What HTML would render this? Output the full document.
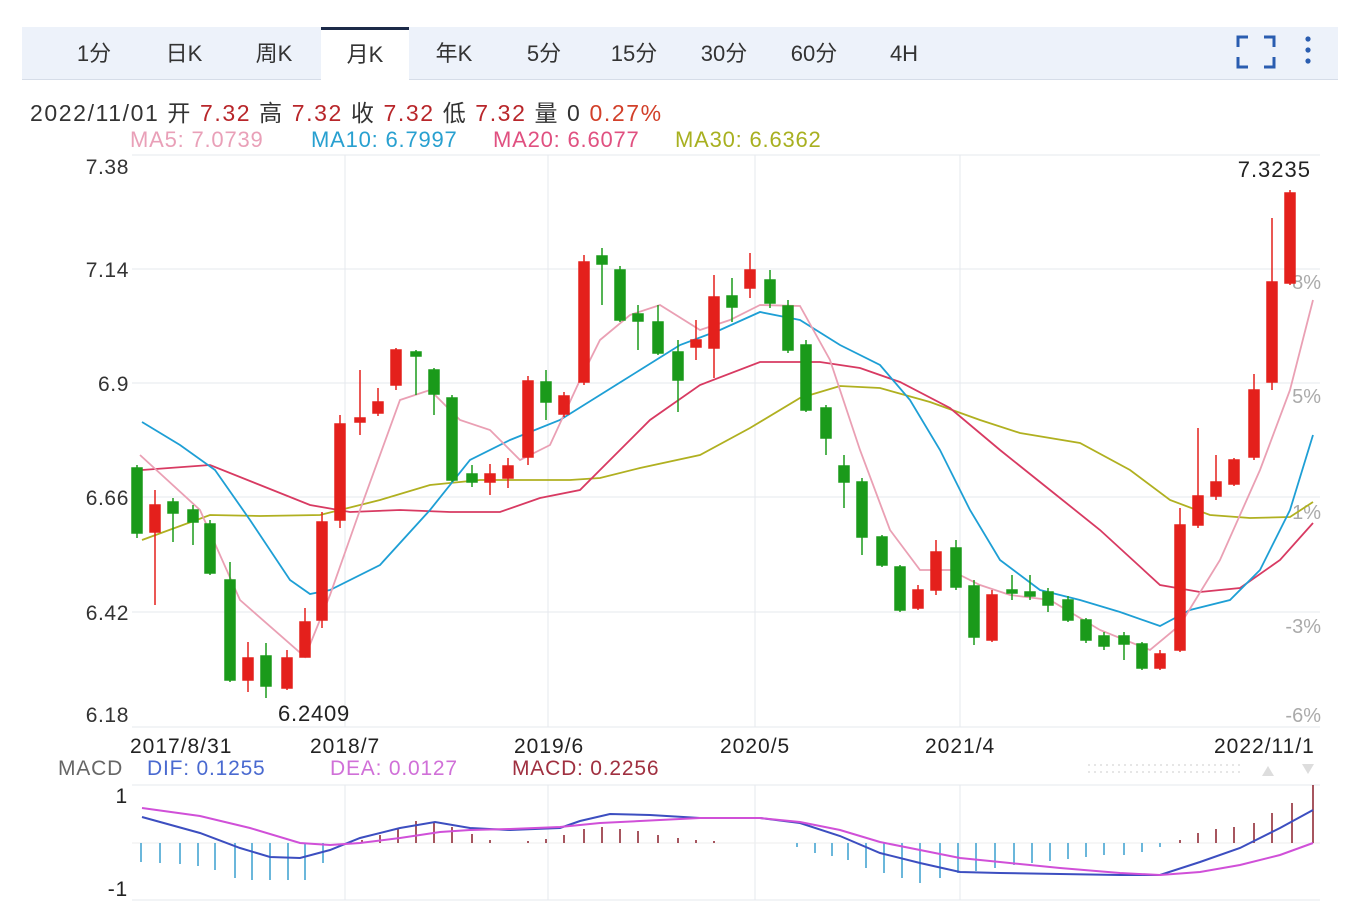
<!DOCTYPE html>
<html><head><meta charset="utf-8">
<style>
html,body{margin:0;padding:0;background:#fff;}
body{width:1364px;height:904px;overflow:hidden;position:relative;font-family:"Liberation Sans","Noto Sans CJK SC",sans-serif;}
.tabs{position:absolute;left:22px;top:27px;width:1316px;height:52px;background:#edf2fa;border-bottom:1px solid #d6dde8;}
.tab{position:absolute;top:0;height:52px;line-height:54px;font-size:22px;color:#333;text-align:center;width:88px;}
.act{background:#fff;border-top:3px solid #1c2a48;height:51px;line-height:50px;}
.t{position:absolute;white-space:nowrap;}
</style></head><body>
<div class="tabs">
<div class="tab" style="left:28px">1分</div>
<div class="tab" style="left:118px">日K</div>
<div class="tab" style="left:208px">周K</div>
<div class="tab act" style="left:299px">月K</div>
<div class="tab" style="left:388px">年K</div>
<div class="tab" style="left:478px">5分</div>
<div class="tab" style="left:568px">15分</div>
<div class="tab" style="left:658px">30分</div>
<div class="tab" style="left:748px">60分</div>
<div class="tab" style="left:838px">4H</div>
<svg style="position:absolute;left:1214px;top:4px" width="40" height="40" viewBox="0 0 40 40"><path d="M2 16V6h10M28 6h10v10M38 26v10H28M12 36H2V26" fill="none" stroke="#2a5db0" stroke-width="3"/></svg>
<svg style="position:absolute;left:1280px;top:4px" width="12" height="40"><circle cx="6" cy="8" r="2.6" fill="#2a5db0"/><circle cx="6" cy="19" r="2.6" fill="#2a5db0"/><circle cx="6" cy="30" r="2.6" fill="#2a5db0"/></svg>
</div>
<div class="t" style="left:30px;top:94px;font-size:23px;letter-spacing:1.6px;color:#333">2022/11/01 开 <span style="color:#b8262a">7.32</span> 高 <span style="color:#b8262a">7.32</span> 收 <span style="color:#b8262a">7.32</span> 低 <span style="color:#b8262a">7.32</span> 量 0 <span style="color:#d2402a">0.27%</span></div>
<div class="t" style="left:130px;top:127px;font-size:22px;letter-spacing:0.8px;color:#e9a0b8">MA5: 7.0739</div>
<div class="t" style="left:311px;top:127px;font-size:22px;letter-spacing:0.8px;color:#28a0d0">MA10: 6.7997</div>
<div class="t" style="left:493px;top:127px;font-size:22px;letter-spacing:0.8px;color:#e05080">MA20: 6.6077</div>
<div class="t" style="left:675px;top:127px;font-size:22px;letter-spacing:0.8px;color:#a8b020">MA30: 6.6362</div>

<svg style="position:absolute;left:0;top:0" width="1364" height="904">
<g stroke="#e6e9ee" stroke-width="1">
<line x1="132" y1="155" x2="1320" y2="155"/>
<line x1="132" y1="269" x2="1320" y2="269"/>
<line x1="132" y1="383" x2="1320" y2="383"/>
<line x1="132" y1="497" x2="1320" y2="497"/>
<line x1="132" y1="612" x2="1320" y2="612"/>
<line x1="132" y1="727" x2="1320" y2="727"/>
<line x1="132" y1="785" x2="1320" y2="785"/>
<line x1="132" y1="900" x2="1320" y2="900"/>
<line x1="345" y1="155" x2="345" y2="727"/><line x1="548" y1="155" x2="548" y2="727"/>
<line x1="755" y1="155" x2="755" y2="727"/><line x1="960" y1="155" x2="960" y2="727"/>
<line x1="345" y1="785" x2="345" y2="900"/><line x1="548" y1="785" x2="548" y2="900"/>
<line x1="755" y1="785" x2="755" y2="900"/><line x1="960" y1="785" x2="960" y2="900"/>
</g>
<g font-family="Liberation Sans" font-size="21" fill="#333" text-anchor="end" letter-spacing="0.6">
<text x="129" y="174">7.38</text><text x="129" y="277">7.14</text><text x="129" y="391">6.9</text>
<text x="129" y="505">6.66</text><text x="129" y="620">6.42</text><text x="129" y="722">6.18</text>
</g>
<g font-family="Liberation Sans" font-size="20" fill="#aaa" text-anchor="end">
<text x="1321" y="403">5%</text><text x="1321" y="519">1%</text><text x="1321" y="633">-3%</text><text x="1321" y="722">-6%</text><text x="1321" y="289">8%</text>
</g>
<text x="1311" y="177" font-family="Liberation Sans" font-size="22" fill="#222" text-anchor="end" letter-spacing="1">7.3235</text>
<text x="278" y="721" font-family="Liberation Sans" font-size="22" fill="#222" letter-spacing="0.8">6.2409</text>
<g font-family="Liberation Sans" font-size="21" fill="#222" letter-spacing="1">
<text x="130" y="753">2017/8/31</text><text x="310" y="753">2018/7</text><text x="514" y="753">2019/6</text>
<text x="720" y="753">2020/5</text><text x="925" y="753">2021/4</text><text x="1214" y="753">2022/11/1</text>
</g>
<g font-family="Liberation Sans" font-size="21" letter-spacing="0.8">
<text x="58" y="775" fill="#666">MACD</text><text x="147" y="775" fill="#4a6ad0">DIF: 0.1255</text>
<text x="330" y="775" fill="#d070d8">DEA: 0.0127</text><text x="512" y="775" fill="#a03040">MACD: 0.2256</text>
<text x="128" y="803" fill="#222" text-anchor="end">1</text><text x="128" y="896" fill="#222" text-anchor="end">-1</text>
</g>
<line x1="1088" y1="765" x2="1240" y2="765" stroke="#ccc" stroke-dasharray="2 4"/>
<line x1="1088" y1="772" x2="1240" y2="772" stroke="#ccc" stroke-dasharray="2 4"/>
<path d="M1262 776l6-10 6 10z" fill="#ddd"/><path d="M1302 764h12l-6 10z" fill="#ddd"/>

<g fill="none" stroke-width="1.8">
<polyline stroke="#b0b020" points="142,540 210,515 260,516 320,515 380,500 430,485 480,480 530,480 570,480 600,478 640,468 700,455 750,428 800,398 840,386 880,388 930,402 980,420 1020,433 1080,443 1130,470 1170,500 1210,515 1250,518 1290,517 1313,502"/>
<polyline stroke="#d83a62" points="142,470 210,465 260,485 310,505 350,512 400,510 450,512 500,512 540,498 580,490 610,460 650,420 700,385 760,362 820,362 860,368 900,382 950,408 1000,450 1050,490 1100,530 1160,585 1200,592 1240,588 1280,560 1313,523"/>
<polyline stroke="#1e9fd5" points="142,422 180,445 215,470 250,520 290,580 310,594 330,590 380,565 430,510 470,460 510,440 560,420 600,395 640,370 680,345 720,330 760,312 800,320 840,345 880,365 910,400 940,450 970,510 1000,560 1040,590 1080,600 1120,612 1160,626 1190,610 1230,600 1260,570 1290,510 1313,435"/>
<polyline stroke="#eaa0b4" points="140,455 200,510 240,600 305,657 330,595 360,510 400,400 430,390 460,420 490,430 520,460 550,445 580,380 600,340 630,315 660,305 700,330 730,320 760,305 800,306 830,360 860,450 890,530 920,570 950,570 980,585 1010,595 1050,600 1100,630 1150,650 1180,625 1220,560 1260,470 1290,390 1313,300"/>
</g>
<g stroke-width="1.5">
<g stroke="#1a9a1a" fill="#1a9a1a">
<line x1="137" y1="465" x2="137" y2="538"/><rect x="132" y="468" width="10" height="65"/>
<line x1="173" y1="498" x2="173" y2="542"/><rect x="168" y="502" width="10" height="11"/>
<line x1="193" y1="505" x2="193" y2="545"/><rect x="188" y="510" width="10" height="12"/>
<line x1="210" y1="520" x2="210" y2="575"/><rect x="205" y="524" width="10" height="49"/>
<line x1="230" y1="562" x2="230" y2="682"/><rect x="225" y="580" width="10" height="100"/>
<line x1="266" y1="643" x2="266" y2="698"/><rect x="261" y="656" width="10" height="30"/>
<line x1="416" y1="350" x2="416" y2="395"/><rect x="411" y="352" width="10" height="4"/>
<line x1="434" y1="368" x2="434" y2="415"/><rect x="429" y="370" width="10" height="24"/>
<line x1="452" y1="395" x2="452" y2="482"/><rect x="447" y="398" width="10" height="82"/>
<line x1="472" y1="465" x2="472" y2="487"/><rect x="467" y="474" width="10" height="8"/>
<line x1="546" y1="370" x2="546" y2="420"/><rect x="541" y="382" width="10" height="20"/>
<line x1="602" y1="248" x2="602" y2="305"/><rect x="597" y="256" width="10" height="8"/>
<line x1="620" y1="266" x2="620" y2="322"/><rect x="615" y="270" width="10" height="50"/>
<line x1="638" y1="305" x2="638" y2="350"/><rect x="633" y="314" width="10" height="7"/>
<line x1="658" y1="305" x2="658" y2="355"/><rect x="653" y="322" width="10" height="31"/>
<line x1="678" y1="340" x2="678" y2="412"/><rect x="673" y="352" width="10" height="28"/>
<line x1="732" y1="278" x2="732" y2="322"/><rect x="727" y="296" width="10" height="11"/>
<line x1="770" y1="270" x2="770" y2="308"/><rect x="765" y="280" width="10" height="23"/>
<line x1="788" y1="300" x2="788" y2="353"/><rect x="783" y="306" width="10" height="44"/>
<line x1="806" y1="340" x2="806" y2="412"/><rect x="801" y="345" width="10" height="65"/>
<line x1="826" y1="405" x2="826" y2="455"/><rect x="821" y="408" width="10" height="30"/>
<line x1="844" y1="455" x2="844" y2="508"/><rect x="839" y="466" width="10" height="16"/>
<line x1="862" y1="478" x2="862" y2="555"/><rect x="857" y="482" width="10" height="55"/>
<line x1="882" y1="535" x2="882" y2="567"/><rect x="877" y="537" width="10" height="28"/>
<line x1="900" y1="565" x2="900" y2="612"/><rect x="895" y="567" width="10" height="43"/>
<line x1="956" y1="540" x2="956" y2="590"/><rect x="951" y="548" width="10" height="39"/>
<line x1="974" y1="580" x2="974" y2="645"/><rect x="969" y="586" width="10" height="51"/>
<line x1="1012" y1="575" x2="1012" y2="600"/><rect x="1007" y="590" width="10" height="3"/>
<line x1="1030" y1="575" x2="1030" y2="600"/><rect x="1025" y="592" width="10" height="4"/>
<line x1="1048" y1="588" x2="1048" y2="612"/><rect x="1043" y="592" width="10" height="13"/>
<line x1="1068" y1="596" x2="1068" y2="622"/><rect x="1063" y="600" width="10" height="20"/>
<line x1="1086" y1="618" x2="1086" y2="643"/><rect x="1081" y="620" width="10" height="20"/>
<line x1="1104" y1="632" x2="1104" y2="650"/><rect x="1099" y="636" width="10" height="10"/>
<line x1="1124" y1="632" x2="1124" y2="660"/><rect x="1119" y="636" width="10" height="8"/>
<line x1="1142" y1="642" x2="1142" y2="670"/><rect x="1137" y="644" width="10" height="24"/>
</g>
<g stroke="#e4201c" fill="#e4201c">
<line x1="155" y1="490" x2="155" y2="605"/><rect x="150" y="505" width="10" height="27"/>
<line x1="248" y1="642" x2="248" y2="692"/><rect x="243" y="658" width="10" height="22"/>
<line x1="287" y1="650" x2="287" y2="690"/><rect x="282" y="658" width="10" height="30"/>
<line x1="305" y1="608" x2="305" y2="657"/><rect x="300" y="622" width="10" height="35"/>
<line x1="322" y1="512" x2="322" y2="628"/><rect x="317" y="522" width="10" height="98"/>
<line x1="340" y1="415" x2="340" y2="528"/><rect x="335" y="424" width="10" height="96"/>
<line x1="360" y1="370" x2="360" y2="435"/><rect x="355" y="418" width="10" height="4"/>
<line x1="378" y1="388" x2="378" y2="416"/><rect x="373" y="402" width="10" height="11"/>
<line x1="396" y1="348" x2="396" y2="390"/><rect x="391" y="350" width="10" height="35"/>
<line x1="490" y1="464" x2="490" y2="495"/><rect x="485" y="474" width="10" height="8"/>
<line x1="508" y1="458" x2="508" y2="488"/><rect x="503" y="466" width="10" height="12"/>
<line x1="528" y1="376" x2="528" y2="465"/><rect x="523" y="381" width="10" height="76"/>
<line x1="564" y1="392" x2="564" y2="417"/><rect x="559" y="396" width="10" height="18"/>
<line x1="584" y1="255" x2="584" y2="385"/><rect x="579" y="262" width="10" height="120"/>
<line x1="696" y1="320" x2="696" y2="360"/><rect x="691" y="340" width="10" height="7"/>
<line x1="714" y1="275" x2="714" y2="378"/><rect x="709" y="297" width="10" height="51"/>
<line x1="750" y1="253" x2="750" y2="298"/><rect x="745" y="270" width="10" height="18"/>
<line x1="918" y1="585" x2="918" y2="610"/><rect x="913" y="590" width="10" height="18"/>
<line x1="936" y1="540" x2="936" y2="595"/><rect x="931" y="552" width="10" height="38"/>
<line x1="992" y1="590" x2="992" y2="642"/><rect x="987" y="595" width="10" height="45"/>
<line x1="1160" y1="650" x2="1160" y2="670"/><rect x="1155" y="654" width="10" height="14"/>
<line x1="1180" y1="508" x2="1180" y2="652"/><rect x="1175" y="525" width="10" height="125"/>
<line x1="1198" y1="428" x2="1198" y2="528"/><rect x="1193" y="496" width="10" height="29"/>
<line x1="1216" y1="455" x2="1216" y2="500"/><rect x="1211" y="482" width="10" height="14"/>
<line x1="1234" y1="458" x2="1234" y2="486"/><rect x="1229" y="460" width="10" height="24"/>
<line x1="1254" y1="374" x2="1254" y2="460"/><rect x="1249" y="390" width="10" height="67"/>
<line x1="1272" y1="218" x2="1272" y2="390"/><rect x="1267" y="282" width="10" height="100"/>
<line x1="1290" y1="190" x2="1290" y2="285"/><rect x="1285" y="193" width="10" height="90"/>
</g>
</g>
<line x1="132" y1="843" x2="1320" y2="843" stroke="#eee"/>
<g stroke="#3a9fcf" stroke-width="1.5">
<path d="M141 843v19M160 843v20M180 843v21M198 843v23M215 843v27M235 843v35M252 843v37M270 843v37M288 843v37M305 843v37M323 843v20"/>
<path d="M797 843v4M815 843v10M832 843v13M848 843v17M866 843v25M884 843v30M902 843v35M920 843v40M940 843v35M958 843v30M976 843v28M995 843v25M1014 843v22M1032 843v20M1050 843v18M1068 843v16M1086 843v14M1104 843v12M1124 843v12M1142 843v9M1160 843v4"/>
</g>
<g stroke="#8a1e2a" stroke-width="1.5">
<path d="M362 843v-3M380 843v-8M398 843v-15M416 843v-22M434 843v-20M452 843v-16M472 843v-9M490 843v-3M528 843v-2M546 843v-4M564 843v-8M584 843v-14M602 843v-16M620 843v-14M638 843v-12M658 843v-8M678 843v-5M696 843v-3M714 843v-2M1180 843v-3M1198 843v-10M1216 843v-14M1234 843v-16M1254 843v-20M1272 843v-30M1292 843v-40M1313 843v-58"/>
</g>
<polyline fill="none" stroke="#3c4ec0" stroke-width="2" points="142,817 200,833 240,848 270,857 300,858 330,850 360,838 400,828 435,822 470,828 510,830 560,828 580,821 610,814 650,815 700,818 760,818 800,823 840,836 880,853 920,863 960,872 1000,873 1060,874 1120,875 1160,875 1200,862 1240,848 1280,828 1313,810"/>
<polyline fill="none" stroke="#d050d8" stroke-width="2" points="142,808 200,816 250,828 300,843 330,845 360,843 400,838 440,832 470,830 510,829 560,827 600,823 640,821 700,818 760,818 800,822 840,830 880,842 920,850 960,858 1000,862 1060,868 1120,873 1160,875 1200,872 1240,865 1280,855 1313,843"/>
</svg>
</body></html>
